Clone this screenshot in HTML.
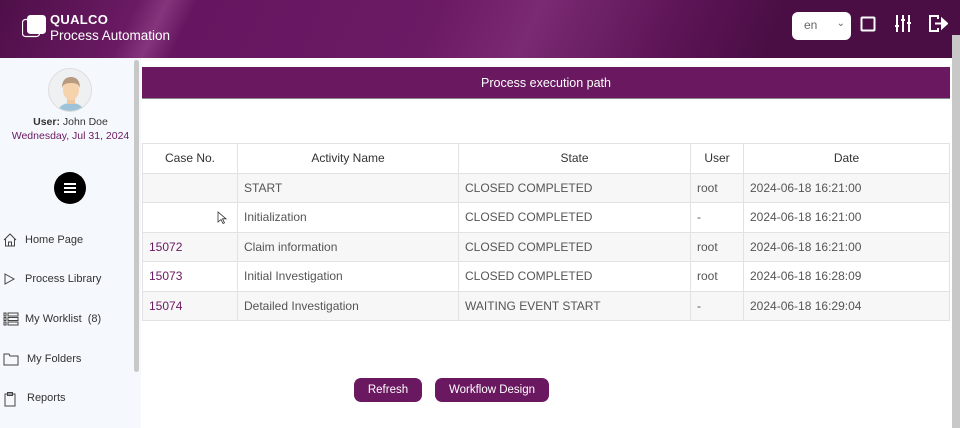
<!DOCTYPE html>
<html><head><meta charset="utf-8"><style>
*{box-sizing:border-box;margin:0;padding:0}
body{width:960px;height:428px;overflow:hidden;font-family:"Liberation Sans",sans-serif;background:#fff;position:relative;color:#444}
.hdr{position:absolute;left:0;top:0;width:960px;height:58px;background:linear-gradient(115deg,#4e0f48 0%,#6a1a63 14%,#84357b 17%,#661660 20%,#6b1a64 45%,#7a2a72 55%,#5c1456 70%,#4a0e44 80%,#4a0e44 100%)}
.logo{position:absolute;left:22px;top:15px}
.brand{position:absolute;left:50px;top:13px;color:#fff}
.brand b{font-size:13px;display:block;line-height:14px;letter-spacing:.3px}
.brand span{font-size:13.5px;line-height:16px}
.sel{position:absolute;left:792px;top:12px;width:59px;height:28px;background:#fff;border-radius:6px;font-size:12px;color:#666;padding:6px 0 0 12px}
.sel i{position:absolute;right:6px;top:6px;font-style:normal;font-size:10px}
.side{position:absolute;left:0;top:58px;width:141px;height:370px;background:#f5f8fc}
.sb{position:absolute;left:134px;top:60px;width:5px;height:312px;background:#c8c8c8;border-radius:3px}
.av{position:absolute;left:48px;top:68px;width:44px;height:44px;border-radius:50%;background:#eef0f2;border:1px solid #ddd;overflow:hidden}
.user{position:absolute;left:0;width:141px;text-align:center;font-size:10.5px}
.menu{position:absolute;left:54px;top:172px;width:32px;height:32px;border-radius:50%;background:#000}
.menu i{position:absolute;left:10px;width:12px;height:1.6px;background:#fff}
.nav{position:absolute;left:0;font-size:11px;color:#333}
.nav svg{position:absolute;left:3px;top:-1px}
.nav span{position:absolute;white-space:nowrap}
.ttl{position:absolute;left:142px;top:67px;width:808px;height:32px;background:#6a1860;color:#fff;font-size:12.5px;text-align:center;line-height:32px;border-bottom:1px solid #888}
table{position:absolute;left:142px;top:143px;width:808px;border-collapse:collapse;font-size:12px}
td,th{border:1px solid #e2e2e2;height:29.5px;padding:0 6px;text-align:left;font-weight:normal;color:#555}
th{text-align:center;color:#333}
tr.g td{background:#f7f7f7}
td.c{color:#6a1860}
.btn{position:absolute;top:378px;height:24px;background:#6a1860;color:#fff;border-radius:7px;font-size:11.5px;text-align:center;line-height:24px}
.psb{position:absolute;left:952px;top:35px;width:8px;height:393px;background:#c8c8c8}
</style></head><body>
<div class="hdr"></div>
<svg class="logo" width="24" height="24" viewBox="0 0 24 24"><rect x="0.5" y="4.5" width="17" height="17" rx="3" fill="none" stroke="#fff" stroke-width="1.2"/><rect x="5" y="0" width="19" height="19" rx="3.5" fill="#fff"/></svg>
<div class="brand"><b>QUALCO</b><span>Process Automation</span></div>
<div class="sel">en<i>⌄</i></div>
<svg style="position:absolute;left:860px;top:16px" width="16" height="16"><rect x="1.5" y="1.5" width="13" height="13" rx="1" fill="none" stroke="#fff" stroke-width="2"/></svg>
<svg style="position:absolute;left:894px;top:14px" width="18" height="19" stroke="#fff" stroke-width="2"><path d="M3 1v17M9 1v17M15 1v17M1 12h4M7 6h4M13 9h4"/></svg>
<svg style="position:absolute;left:928px;top:14px" width="20" height="19" fill="none" stroke="#fff" stroke-width="2"><path d="M10 5V2H2v15h8v-3"/><path d="M7 9.5h8" /><path d="M14 5l5 4.5-5 4.5z" fill="#fff"/></svg>
<div class="side"></div>
<div class="sb"></div>
<div class="av"><svg width="44" height="44" viewBox="0 0 44 44"><path d="M8 44c2-8 8-10 14-10s12 2 14 10z" fill="#9ec3d8"/><rect x="18" y="26" width="8" height="9" fill="#f0c9a0"/><ellipse cx="22" cy="21" rx="8" ry="10" fill="#f6d3ad"/><path d="M13 19c0-8 4-11 9-11s9 3 9 11c-1-3-3-5-9-5s-8 2-9 5z" fill="#b89a80"/></svg></div>
<div class="user" style="top:116px;color:#333"><b style="font-weight:bold">User:</b> John Doe</div>
<div class="user" style="top:130px;color:#6a1860">Wednesday, Jul 31, 2024</div>
<div class="menu"><i style="top:11px"></i><i style="top:15px"></i><i style="top:19px"></i></div>
<div class="nav" style="top:234px"><svg width="14" height="14" fill="none" stroke="#444"><path d="M1 7L7 1l6 6M2.5 6v7h9V6M5.5 13V9h3v4"/></svg><span style="left:25px">Home Page</span></div>
<div class="nav" style="top:273px"><svg width="14" height="14" fill="none" stroke="#444"><path d="M2 2l9 5-9 5z"/></svg><span style="left:25px">Process Library</span></div>
<div class="nav" style="top:313px"><svg width="16" height="14" fill="none" stroke="#444"><path d="M1 1h2v3H1zM1 5.5h2v3H1zM1 10h2v3H1zM5 1h10v3H5zM5 5.5h10v3H5zM5 10h10v3H5z"/></svg><span style="left:25px">My Worklist &nbsp;(8)</span></div>
<div class="nav" style="top:353px"><svg width="16" height="14" fill="none" stroke="#444"><path d="M1 2h5l1 2h8v9H1z"/></svg><span style="left:27px">My Folders</span></div>
<div class="nav" style="top:392px"><svg width="14" height="16" fill="none" stroke="#444"><path d="M2 3h10v12H2zM4.5 1.5h5v3h-5z"/></svg><span style="left:27px">Reports</span></div>
<div class="ttl">Process execution path</div>
<table>
<tr><th style="width:95px">Case No.</th><th style="width:221px">Activity Name</th><th style="width:232px">State</th><th style="width:53px">User</th><th>Date</th></tr>
<tr class="g"><td></td><td>START</td><td>CLOSED COMPLETED</td><td>root</td><td>2024-06-18 16:21:00</td></tr>
<tr><td></td><td>Initialization</td><td>CLOSED COMPLETED</td><td>-</td><td>2024-06-18 16:21:00</td></tr>
<tr class="g"><td class="c">15072</td><td>Claim information</td><td>CLOSED COMPLETED</td><td>root</td><td>2024-06-18 16:21:00</td></tr>
<tr><td class="c">15073</td><td>Initial Investigation</td><td>CLOSED COMPLETED</td><td>root</td><td>2024-06-18 16:28:09</td></tr>
<tr class="g"><td class="c">15074</td><td>Detailed Investigation</td><td>WAITING EVENT START</td><td>-</td><td>2024-06-18 16:29:04</td></tr>
</table>
<svg style="position:absolute;left:217px;top:211px" width="10" height="14"><path d="M1 1v10l3-2.5 2 4 1.5-.7-2-4H9z" fill="#fff" stroke="#333" stroke-width=".8"/></svg>
<div class="btn" style="left:354px;width:68px">Refresh</div>
<div class="btn" style="left:435px;width:114px">Workflow Design</div>
<div class="psb"></div>
</body></html>
